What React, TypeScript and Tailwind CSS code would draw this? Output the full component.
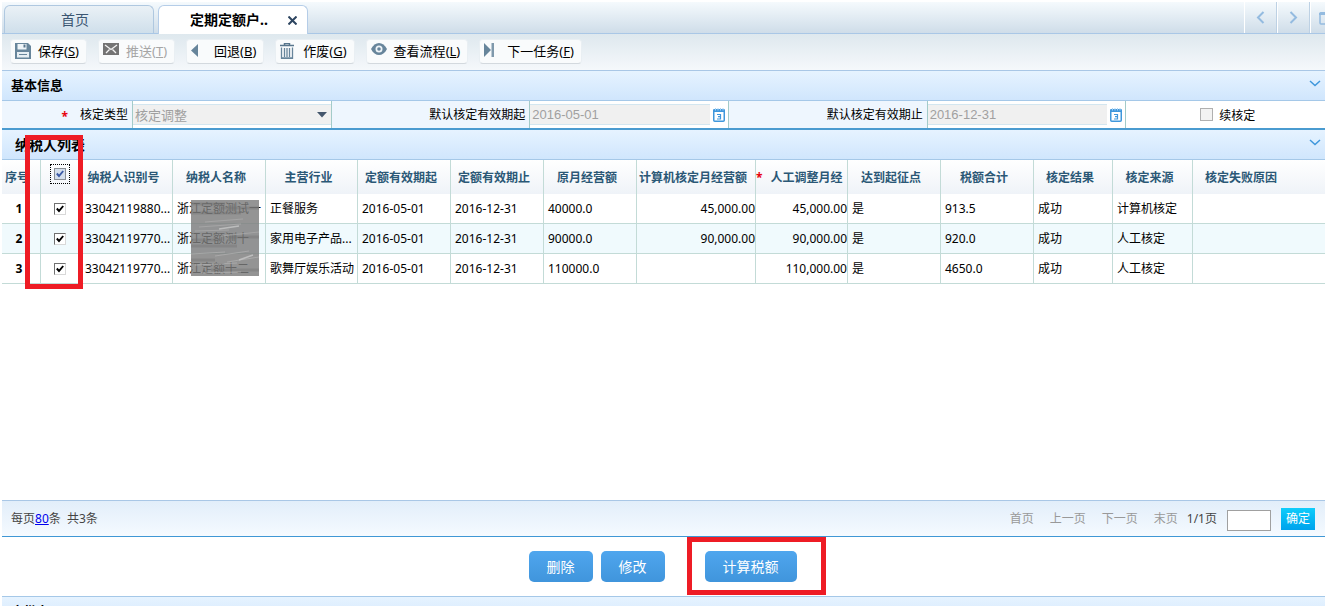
import { useState } from 'react'

interface Taxpayer {
  id: number
  code: string
  name: string
  industry: string
  monthly: string
  computed: string
  adjusted: string
  tax: string
  source: string
}

const taxpayers: Taxpayer[] = [
  { id: 1, code: '33042119880...', name: '浙江定额测试一', industry: '正餐服务', monthly: '40000.0', computed: '45,000.00', adjusted: '45,000.00', tax: '913.5', source: '计算机核定' },
  { id: 2, code: '33042119770...', name: '浙江定额测十', industry: '家用电子产品...', monthly: '90000.0', computed: '90,000.00', adjusted: '90,000.00', tax: '920.0', source: '人工核定' },
  { id: 3, code: '33042119770...', name: '浙江定额十二', industry: '歌舞厅娱乐活动', monthly: '110000.0', computed: '', adjusted: '110,000.00', tax: '4650.0', source: '人工核定' },
]

const columns = [
  { title: '纳税人识别号', width: 'w-[92px]' },
  { title: '纳税人名称', width: 'w-[93px]' },
  { title: '主营行业', width: 'w-[92px]' },
  { title: '定额有效期起', width: 'w-[93px]' },
  { title: '定额有效期止', width: 'w-[93px]' },
  { title: '原月经营额', width: 'w-[93px]' },
  { title: '计算机核定月经营额', width: 'w-[119px]' },
  { title: '人工调整月经', width: 'w-[92px]', required: true },
  { title: '达到起征点', width: 'w-[93px]' },
  { title: '税额合计', width: 'w-[93px]' },
  { title: '核定结果', width: 'w-[79px]' },
  { title: '核定来源', width: 'w-[80px]' },
]

const SaveIcon = () => (
  <svg width="16" height="16" viewBox="0 0 16 16">
    <path d="M0 0h13l3 3v13H0z" fill="#67859b" />
    <path d="M2.5 1h9v5.500h-9z" fill="#eef4f8" />
    <path d="M8.5 1.5h2v3h-2z" fill="#57758c" />
    <path d="M2 9h12v5.500H2z" fill="#e6eef3" />
    <path d="M4 11.500h8" stroke="#67859b" />
  </svg>
)

const MailIcon = () => (
  <svg width="16" height="12" viewBox="0 0 16 12">
    <path d="M0 0h16v12H0z" fill="#747474" />
    <path d="M2 2l6 4.500L14 2M3 10l3.500-3.500M13 10L9.500 6.500" fill="none" stroke="#f4f4f4" strokeWidth="1.300" />
  </svg>
)

const BackIcon = () => (
  <svg width="16" height="16" viewBox="0 0 16 16">
    <path d="M7 1v13L0 7.500z" fill="#67859b" />
  </svg>
)

const TrashIcon = () => (
  <svg width="14" height="16" viewBox="0 0 14 16">
    <path d="M4.500 2V.5h5V2M0 2.500h14" fill="none" stroke="#57758c" strokeWidth="1.500" />
    <path d="M1.500 4.500v11h11v-11M4.500 5v9M7 5v9M9.500 5v9M1.500 15h11" fill="none" stroke="#67859b" strokeWidth="1.300" />
  </svg>
)

const EyeIcon = () => (
  <svg width="16" height="12" viewBox="0 0 16 12">
    <path d="M0 6C4-2 12-2 16 6c-4 8-12 8-16 0z" fill="#67859b" />
    <circle cx="8" cy="6" r="3.500" fill="#eef4f8" />
    <circle cx="8" cy="6" r="1.800" fill="#67859b" />
  </svg>
)

const NextIcon = () => (
  <svg width="16" height="14" viewBox="0 0 16 14">
    <path d="M0 0l7 7-7 7z" fill="#67859b" />
    <path d="M7.500 0H10v14H7.500z" fill="#7f99ac" />
  </svg>
)

const actions = [
  { label: '保存', hotkey: 'S', icon: <SaveIcon /> },
  { label: '推送', hotkey: 'T', icon: <MailIcon />, disabled: true },
  { label: '回退', hotkey: 'B', icon: <BackIcon /> },
  { label: '作废', hotkey: 'G', icon: <TrashIcon /> },
  { label: '查看流程', hotkey: 'L', icon: <EyeIcon /> },
  { label: '下一任务', hotkey: 'F', icon: <NextIcon /> },
]

const SectionHeader = ({ title, className }: { title: string; className: string }) => (
  <div className={`flex h-[30px] shrink-0 items-center justify-between border-b border-[#a5c8e8] bg-linear-to-b from-[#e6f3ff] to-[#d0e6fd] pr-1 font-bold ${className}`}>
    <h2>{title}</h2>
    <button type="button" aria-label={`折叠${title}`} className="pb-1">
      <svg width="12" height="7" viewBox="0 0 12 7">
        <path d="M1 1l5 4.500L11 1" fill="none" stroke="#3f97dc" strokeWidth="1.500" />
      </svg>
    </button>
  </div>
)

const DateField = ({ id, label, value }: { id: string; label: string; value: string }) => (
  <>
    <label htmlFor={id} className="flex items-center justify-end border-r border-[#a3cbc9] bg-[#eef6fe] pr-1">
      {label}
    </label>
    <div className="flex items-center border-r border-[#a3cbc9]">
      <input
        id={id}
        disabled
        defaultValue={value}
        className="h-[21px] w-0 flex-1 border-y border-[#d3e6f0] bg-[#f0f0f0] px-0.5 font-['Liberation_Sans',sans-serif] text-[13px] text-[#a0a0a0]"
      />
      <button type="button" aria-label={`选择${label}`} className="px-[3px]">
        <svg width="12" height="14" viewBox="0 0 12 14">
          <rect x=".75" y="1.750" width="10.500" height="11.500" rx="1" fill="#fff" stroke="#3f97dc" strokeWidth="1.500" />
          <path d="M0 1.500h12V4H0z" fill="#3f97dc" />
          <path d="M2.500 0v2.500M5 0v2.500M7.500 0v2.500M10 0v2.500" stroke="#a9d3f5" />
          <path d="M4 6.500h3.500v4.500H4M5 8.700h2.500" fill="none" stroke="#3f97dc" strokeWidth="1.200" />
        </svg>
      </button>
    </div>
  </>
)

const Check = ({ label, checked, header, onChange }: { label: string; checked: boolean; header?: boolean; onChange: () => void }) => (
  <span className={`relative inline-flex align-middle ${header ? 'border border-dotted border-black p-[3px]' : ''}`}>
    <input
      type="checkbox"
      aria-label={label}
      checked={checked}
      onChange={onChange}
      className={`size-3 appearance-none border ${header ? 'border-[#8a8f96] bg-[#d5dfec]' : 'border-t-[#707070] border-r-[#d8d8d8] border-b-[#d8d8d8] border-l-[#707070] bg-white'}`}
    />
    {checked && (
      <svg className="pointer-events-none absolute inset-0 m-auto" width="8" height="8" viewBox="0 0 8 8">
        <path d="M.8 3.500L3 6 7.200 1" fill="none" stroke={header ? '#3c5aa6' : '#000'} strokeWidth="1.900" />
      </svg>
    )}
  </span>
)

const App: React.FC = () => {
  const [selected, setSelected] = useState<number[]>([1, 2, 3])
  const allSelected = selected.length === taxpayers.length

  const toggle = (id: number) =>
    setSelected(selected.includes(id) ? selected.filter((item) => item !== id) : [...selected, id])

  return (
    <div className="flex h-screen flex-col overflow-hidden bg-white p-0.5 font-['Noto_Sans','Noto_Sans_CJK_SC',sans-serif] text-xs text-black">
      {/* Tabs */}
      <div className="flex h-8 shrink-0 items-end justify-between border-b border-[#a9c7e6] bg-linear-to-b from-[#f5fafd] to-[#cfdde9]">
        <div className="flex gap-1 pl-0.5 text-sm">
          <button type="button" className="h-7 w-[150px] rounded-t-md border border-b-0 border-[#afc8e0] bg-linear-to-b from-[#eaf1f6] to-[#cfdfeb] pr-2 text-[#3b5672]">
            首页
          </button>
          <div className="-mb-px flex h-[29px] w-[150px] items-center justify-between rounded-t-md border border-b-0 border-[#b5cde8] bg-white pr-2.5 pl-[31px]">
            <button type="button" className="font-bold">定期定额户..</button>
            <button type="button" aria-label="关闭">
              <svg width="9" height="9" viewBox="0 0 9 9">
                <path d="M.5 .5l8 8M8.500 .5l-8 8" stroke="#2d4560" strokeWidth="2" />
              </svg>
            </button>
          </div>
        </div>
        <div className="flex h-full">
          <button type="button" aria-label="向左" className="flex w-[33px] items-center justify-center border-r border-l border-r-[#bdd1e4] border-l-white">
            <svg width="9" height="13" viewBox="0 0 9 13">
              <path d="M7.500 1L2 6.500 7.500 12" fill="none" stroke="#94bbe0" strokeWidth="2" />
            </svg>
          </button>
          <button type="button" aria-label="向右" className="flex w-[33px] items-center justify-center border-r border-l border-r-[#bdd1e4] border-l-white">
            <svg width="9" height="13" viewBox="0 0 9 13">
              <path d="M1.500 1L7 6.500 1.500 12" fill="none" stroke="#94bbe0" strokeWidth="2" />
            </svg>
          </button>
          <button type="button" aria-label="窗口" className="flex w-[15px] items-center justify-end border-l border-white">
            <svg width="6" height="14" viewBox="0 0 6 14">
              <path d="M6 13H2a1 1 0 0 1-1-1V3" fill="none" stroke="#94bbe0" strokeWidth="1.500" />
              <path d="M0 4V2l1.500-1H6v3z" fill="#94bbe0" />
            </svg>
          </button>
        </div>
      </div>

      {/* Toolbar */}
      <div className="flex h-[37px] shrink-0 items-center gap-[11px] border-b border-[#a9c7e6] bg-linear-to-b from-[#dee8ee] to-[#f5f8fb] pb-px pl-2">
        {actions.map((action) => (
          <button
            key={action.hotkey}
            type="button"
            disabled={action.disabled}
            className="flex h-[25px] items-center rounded-sm border border-[#e9eff3] border-b-[#d3d9de] bg-[#f9fbfc] pr-[7px] pl-1 text-[13px] disabled:text-[#a5a5a5]"
          >
            <span className="mr-[7px] flex h-[18px] w-4 items-start">{action.icon}</span>
            {action.label}(<u>{action.hotkey}</u>)
          </button>
        ))}
      </div>

      {/* Basic info */}
      <SectionHeader title="基本信息" className="pl-[9px] text-[13px]" />
      <form className="grid h-[29px] shrink-0 grid-cols-[131px_1fr_1fr_1fr_1fr_1fr_1fr] border-b-2 border-[#4a9bd0]">
        <label htmlFor="type" className="flex items-center justify-end gap-3 border-r border-[#a3cbc9] bg-[#eef6fe] pr-1">
          <span className="pt-1 font-bold text-red-600">*</span>
          核定类型
        </label>
        <div className="relative flex items-center border-r border-[#a3cbc9]">
          <select
            id="type"
            disabled
            className="h-[21px] w-full appearance-none border-y border-[#d3e6f0] bg-[#f0f0f0] px-0.5 text-[13px] leading-4 text-[#a0a0a0] opacity-100"
          >
            <option>核定调整</option>
          </select>
          <svg className="pointer-events-none absolute right-1" width="10" height="6" viewBox="0 0 10 6">
            <path d="M0 0h10L5 5.500z" fill="#44566c" />
          </svg>
        </div>
        <DateField id="start" label="默认核定有效期起" value="2016-05-01" />
        <DateField id="end" label="默认核定有效期止" value="2016-12-31" />
        <label className="flex items-center justify-center gap-1.5 pl-1">
          <input type="checkbox" disabled className="size-[13px] appearance-none border border-[#b0b0b0] bg-[#f3f3f3]" />
          <span className="pt-0.5">续核定</span>
        </label>
      </form>

      {/* Taxpayer list */}
      <div className="relative min-h-0 flex-1">
        <SectionHeader title="纳税人列表" className="pl-[13px] text-sm" />
        <table className="w-full table-fixed border-separate border-spacing-0 whitespace-nowrap">
          <thead>
            <tr className="h-[34px] bg-linear-to-b from-white to-[#eff3f8] text-[#2b5876] [&>th]:border-r [&>th]:border-[#c3dbd7] [&>th:last-child]:border-r-0">
              <th className="w-[39px] p-0 pt-0.5 pr-2">序号</th>
              <th className="w-[40px] p-0 pr-0.5 pb-1.5">
                <Check
                  header
                  label="全选"
                  checked={allSelected}
                  onChange={() => setSelected(allSelected ? [] : taxpayers.map((item) => item.id))}
                />
              </th>
              {columns.map((column) => (
                <th key={column.title} className={`${column.width} p-0 pt-0.5 pr-1.5`}>
                  {column.required && <span className="mr-2 text-red-600">*</span>}
                  {column.title}
                </th>
              ))}
              <th className="p-0 pt-0.5 pr-9">核定失败原因</th>
            </tr>
          </thead>
          <tbody>
            {taxpayers.map((item) => (
              <tr
                key={item.id}
                className="h-[30px] even:bg-[#f0fafd] [&>td]:border-r [&>td]:border-b [&>td]:border-[#c3dbd7] [&>td:last-child]:border-r-0 [&>td:nth-child(n+3)]:pl-1"
              >
                <td className="pr-1 text-center font-bold">{item.id}</td>
                <td className="pr-0.5 text-center">
                  <Check label={item.name} checked={selected.includes(item.id)} onChange={() => toggle(item.id)} />
                </td>
                <td>{item.code}</td>
                <td>{item.name}</td>
                <td>{item.industry}</td>
                <td>2016-05-01</td>
                <td>2016-12-31</td>
                <td>{item.monthly}</td>
                <td className="text-right">{item.computed}</td>
                <td className="text-right">{item.adjusted}</td>
                <td>是</td>
                <td>{item.tax}</td>
                <td>成功</td>
                <td>{item.source}</td>
                <td></td>
              </tr>
            ))}
          </tbody>
        </table>

        {/* Smudge over the names */}
        <svg className="absolute top-[70px] left-[189px]" width="68" height="76" viewBox="0 0 68 76">
          <rect width="68" height="76" fill="#7d7d7d" fillOpacity=".82" />
          <g fill="none">
            <path d="M0 4h34M30 8h38M0 13h50M0 40h30M38 37h30M0 46h46M0 60h24M20 70h48" stroke="#6c6c6c" strokeWidth="3" opacity=".35" />
            <path d="M14 22l38-3M8 27l42-3M4 31l34-1M30 36l38-4" stroke="#adadad" strokeWidth="1" opacity=".7" />
            <path d="M24 56l34-5M0 54l34-2M36 62l32-5M4 65l42-2M10 73l40-1" stroke="#b2b2b2" strokeWidth="1" opacity=".7" />
            <path d="M48 60l14-5M28 29l20-3" stroke="#cfcfcf" strokeWidth="1.500" opacity=".7" />
          </g>
        </svg>

        {/* Marker round the tick boxes */}
        <div className="pointer-events-none absolute top-[5px] left-[23px] h-[154px] w-[58px] border-5 border-[#ee1c25]" />
      </div>

      {/* Pager */}
      <div className="flex h-[37px] shrink-0 items-center justify-between border-t border-b border-t-[#a9c7e6] border-b-[#3f97d5] bg-linear-to-b from-[#e2eefa] to-[#f5faff] pr-2.5 pl-[9px] text-[#444]">
        <p>
          每页<a href="#size" className="text-[#0000ee] underline">80</a>条 &nbsp;共3条
        </p>
        <div className="flex items-center">
          <nav className="flex gap-4 pr-[9px] text-[#999]">
            <a href="#first">首页</a>
            <a href="#prev">上一页</a>
            <a href="#next">下一页</a>
            <a href="#last">末页</a>
          </nav>
          <span>1/1页</span>
          <input type="text" aria-label="页码" className="mx-2.5 mt-1 h-[21px] w-11 border border-[#a0a0a0] bg-white px-1" />
          <button type="button" className="h-[22px] bg-linear-to-b from-[#10cdfb] to-[#00a2ec] px-[5px] text-white">确定</button>
        </div>
      </div>

      {/* Row actions */}
      <div className="flex h-[59px] shrink-0 items-center justify-center gap-2 pr-0.5 text-sm text-white">
        <button type="button" className="h-[31px] rounded-[5px] bg-linear-to-b from-[#4fa6ee] to-[#4095dc] px-[18px]">删除</button>
        <button type="button" className="h-[31px] rounded-[5px] bg-linear-to-b from-[#4fa6ee] to-[#4095dc] px-[18px]">修改</button>
        <div className="relative ml-8">
          <button type="button" className="block h-[31px] rounded-[5px] bg-linear-to-b from-[#4fa6ee] to-[#4095dc] px-[18px]">计算税额</button>
          <div className="pointer-events-none absolute -top-3.5 -right-[29px] -bottom-[13px] -left-[18px] border-5 border-[#ee1c25]" />
        </div>
      </div>

      {/* Next section, only its top edge is in view */}
      <div className="h-2.5 shrink-0 overflow-hidden border-t border-[#a5c8e8]">
        <SectionHeader title="文批办" className="pl-[9px] text-[13px]" />
      </div>
    </div>
  )
}

export default App
